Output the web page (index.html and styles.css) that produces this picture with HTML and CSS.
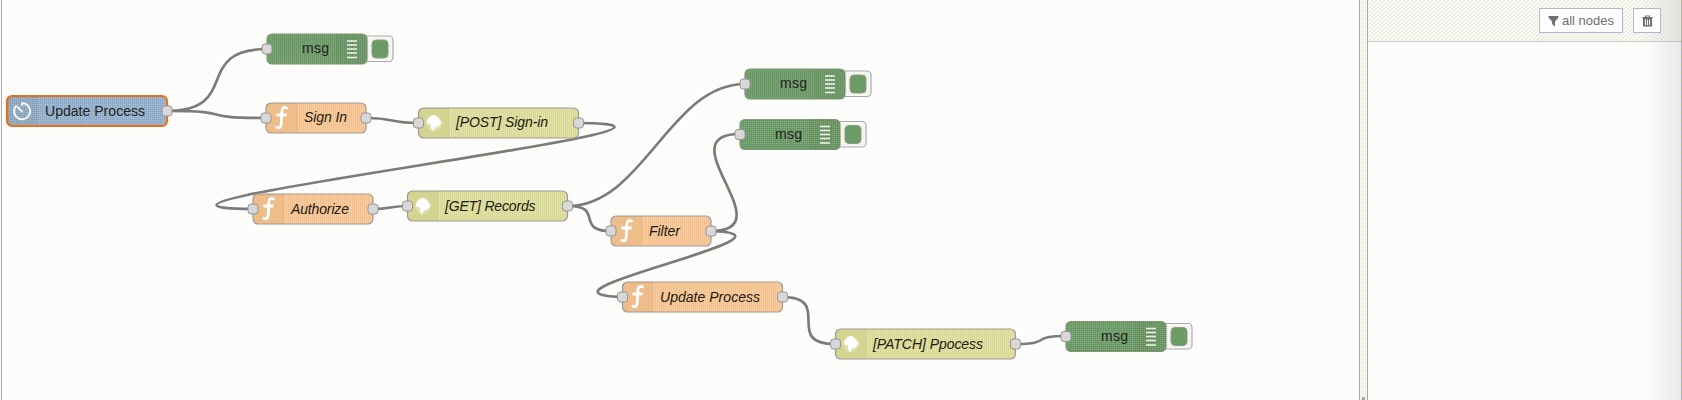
FILE: index.html
```
<!DOCTYPE html>
<html lang="en">
<head>
<meta charset="utf-8">
<title>Flow editor</title>
<link rel="stylesheet" href="styles.css">
</head>
<body>
<div class="editor">
<main class="workspace">
<svg class="canvas" width="1359" height="400" viewBox="0 0 1359 400">
  <defs>
    <pattern id="grain" width="4" height="4" patternUnits="userSpaceOnUse">
      <path class="grain-light" d="M0 0h1v1h-1zM2 2h1v1h-1zM2 0h1v1h-1zM0 2h1v1h-1z"/>
      <path class="grain-dark" d="M1 1h1v1h-1zM3 3h1v1h-1zM3 1h1v1h-1zM1 3h1v1h-1z"/>
    </pattern>
    <g id="port"><rect class="port" x="-5" y="-5" width="10" height="10" rx="3"/></g>
    <g id="fn">
      <path class="shade" d="M5 .5H30V30H5a4.500 4.500 0 0 1-4.500-4.500V5A4.500 4.500 0 0 1 5 .5z"/>
      <path class="divider" d="M30.500 1v29"/>
      <path class="glyph" d="M20.500 5.500c-3.200-1.300-4.500 0-4.700 4L15.300 20.500c-.3 4.200-1.500 5.800-4.500 4.300M11.500 12.500h8"/>
    </g>
    <g id="web">
      <path class="shade" d="M5 .5H30V30H5a4.500 4.500 0 0 1-4.500-4.500V5A4.500 4.500 0 0 1 5 .5z"/>
      <path class="divider" d="M30.500 1v29"/>
      <circle class="globe-haze" cx="16" cy="15.500" r="8"/>
      <path class="globe" d="M9 13l3-4 4-2 4 3 3.500 5-3 4-3.500 1-2 4-2-3v-4l-4-1z"/>
    </g>
    <g id="debug">
      <rect class="button" x="86" y="2.500" width="40" height="25.500" rx="4"/>
      <rect class="button-grain" x="101" y="4" width="23" height="22"/>
      <rect class="button-face" x="105" y="6.500" width="16" height="18" rx="4"/>
      <rect class="node green" x="0" y=".5" width="100" height="30" rx="5"/>
      <path class="shade" d="M70 .5h25.500a4.500 4.500 0 0 1 4.500 4.500v21a4.500 4.500 0 0 1-4.500 4.500H70z"/>
      <path class="divider" d="M69.500 1v29"/>
      <path class="bars" d="M80 7.500h10M80 11.500h10M80 15.500h10M80 19.500h10M80 24h10"/>
      <rect class="grain" x="0" y=".5" width="100" height="30" rx="5"/>
      <text class="label" x="35" y="19.500" textLength="27">msg</text>
      <use href="#port" x="0" y="15.500"/>
    </g>
  </defs>

  <g class="wires">
    <path d="M167 111C242 111 192 49 267 49"/>
    <path d="M167 111C242 111 191 118 266 118"/>
    <path d="M366 118C395 118 389 123 418 123"/>
    <path d="M578 123C783 124 48 208 253 209"/>
    <path d="M373 209C391 209 390 206 408 206"/>
    <path d="M568 206C643 206 670 84 745 84"/>
    <path d="M568 206C605 206 574 231 611 231"/>
    <path d="M711 231C786 231 665 134 740 134"/>
    <path d="M711 231C821.600 234.600 511.400 293.400 622 297"/>
    <path d="M782 297C835 297 782 344 835 344"/>
    <path d="M1015 344C1055 344 1027 336 1067 336"/>
  </g>

  <g transform="translate(7 96)">
    <rect class="node blue" x="0" y="0" width="160" height="30" rx="5"/>
    <path class="shade" d="M5 1H30V29H5a4 4 0 0 1-4-4V5A4 4 0 0 1 5 1z"/>
    <path class="divider" d="M30.500 1v28"/>
    <rect class="grain" x="1" y="1" width="158" height="28" rx="4"/>
    <path class="clock" d="M15 9V7.200A8 8 0 1 1 9 10M15 15.500L10.500 11"/>
    <text class="label" x="38" y="19.500" textLength="100">Update Process</text>
    <use href="#port" x="160" y="15"/>
  </g>

  <use href="#debug" x="267" y="33.500"/>
  <use href="#debug" x="745" y="68.500"/>
  <use href="#debug" x="740" y="119"/>
  <use href="#debug" x="1066" y="321"/>

  <g transform="translate(266 102.500)">
    <rect class="node orange" x="0" y=".5" width="100" height="30" rx="5"/>
    <use href="#fn"/><rect class="grain" x="31" y="1" width="68.500" height="29" rx="4"/>
    <text class="label changed" x="38" y="19.500" textLength="43">Sign In</text>
    <use href="#port" x="0" y="15.500"/><use href="#port" x="100" y="15.500"/>
  </g>
  <g transform="translate(418 107.500)">
    <rect class="node yellow" x=".5" y=".5" width="160" height="30" rx="5"/>
    <use href="#web"/><rect class="grain" x="31" y="1" width="129" height="29" rx="4"/>
    <text class="label changed" x="38" y="19.500" textLength="92">[POST] Sign-in</text>
    <use href="#port" x="0.500" y="15.500"/><use href="#port" x="160.500" y="15.500"/>
  </g>
  <g transform="translate(253 193.500)">
    <rect class="node orange" x="0" y=".5" width="120" height="30" rx="5"/>
    <use href="#fn"/><rect class="grain" x="31" y="1" width="88.500" height="29" rx="4"/>
    <text class="label changed" x="38" y="20" textLength="58">Authorize</text>
    <use href="#port" x="0" y="15.500"/><use href="#port" x="120" y="15.500"/>
  </g>
  <g transform="translate(407 190.500)">
    <rect class="node yellow" x=".5" y=".5" width="160" height="30" rx="5"/>
    <use href="#web"/><rect class="grain" x="31" y="1" width="129" height="29" rx="4"/>
    <text class="label changed" x="38" y="20" textLength="90.500">[GET] Records</text>
    <use href="#port" x="0.500" y="15.500"/><use href="#port" x="160.500" y="15.500"/>
  </g>
  <g transform="translate(611 215.500)">
    <rect class="node orange" x="0" y=".5" width="100" height="30" rx="5"/>
    <use href="#fn"/><rect class="grain" x="31" y="1" width="68.500" height="29" rx="4"/>
    <text class="label changed" x="38" y="20" textLength="31">Filter</text>
    <use href="#port" x="0" y="15.500"/><use href="#port" x="100" y="15.500"/>
  </g>
  <g transform="translate(622 281.500)">
    <rect class="node orange" x=".5" y=".5" width="160" height="30" rx="5"/>
    <use href="#fn"/><rect class="grain" x="31" y="1" width="129" height="29" rx="4"/>
    <text class="label changed" x="38" y="20" textLength="100">Update Process</text>
    <use href="#port" x="0.500" y="15.500"/><use href="#port" x="160.500" y="15.500"/>
  </g>
  <g transform="translate(835 328.500)">
    <rect class="node yellow" x=".5" y=".5" width="180" height="30" rx="5"/>
    <use href="#web"/><rect class="grain" x="31" y="1" width="149" height="29" rx="4"/>
    <text class="label changed" x="38" y="20" textLength="110">[PATCH] Ppocess</text>
    <use href="#port" x="0.500" y="15.500"/><use href="#port" x="180.500" y="15.500"/>
  </g>
</svg>
</main>
<div class="separator"><span class="grip"></span></div>
<aside class="sidebar">
  <header class="toolbar">
    <button class="tool filter">
      <svg width="11" height="12" viewBox="0 0 11 12"><path d="M.5 1h10v1.500L7 6.500v5L4 9V6.500L.5 2.500z"/></svg>
      <span>all nodes</span>
    </button>
    <button class="tool trash">
      <svg width="11" height="12" viewBox="0 0 11 12"><path fill-rule="evenodd" d="M3 2V.5h5V2h2.500v1.500H10V11.500H1V3.500H.5V2zM4.200 1.300V2h2.600v-.7zM3 4.500v5.500h1V4.500zM5 4.500v5.500h1V4.500zM7 4.500v5.500h1V4.500z"/></svg>
    </button>
  </header>
  <div class="panel"></div>
</aside>
</div>
</body>
</html>
```
FILE: styles.css
```
* { box-sizing: border-box; }

body {
  margin: 0;
  height: 400px;
  overflow: hidden;
  font-family: "Liberation Sans", Arial, sans-serif;
}

.editor {
  display: flex;
  width: 1682px;
  height: 400px;
  background-color: #fdfdff;
  background-image:
    conic-gradient(at 1px 1px, transparent 75%, #ffff96 0),
    conic-gradient(at 1px 1px, transparent 75%, #ffff96 0);
  background-size: 8px 8px;
  background-position: 0 0, 4px 4px;
}

.workspace {
  width: 1359px;
  box-shadow: inset 1px 0 #fdfdff, inset 2px 0 #aaaaad;
}

.canvas { display: block; }

.wires path { fill: none; stroke: #7c7b7a; stroke-width: 2.7; }

.node { stroke: #a09c98; stroke-width: 1.2; }
.blue { fill: #94b1cc; stroke: #e8701c; stroke-width: 2.2; }
.green { fill: #6c9c66; stroke: #7d9574; }
.orange { fill: #fcc792; }
.yellow { fill: #e0e09a; }

.grain { fill: url(#grain); }
.grain-light { fill: #ffffff; fill-opacity: .16; }
.grain-dark { fill: #555588; fill-opacity: .13; }

.shade { fill: #505020; fill-opacity: .08; }
.divider { stroke: #555; stroke-opacity: .25; stroke-dasharray: 1 1; }

.port { fill: #d8d8d8; stroke: #969696; }

.glyph { fill: none; stroke: #fff; stroke-width: 2.8; stroke-linecap: round; }
.globe { fill: #fff; }
.globe-haze { fill: #fff; fill-opacity: .25; }
.bars { stroke: #fafaf0; stroke-width: 1.4; }
.clock { fill: none; stroke: #f4f7fa; stroke-width: 1.8; stroke-linecap: round; }

.button { fill: #fafaf2; stroke: #a8a8b4; stroke-width: 1.2; }
.button-grain { fill: url(#grain); }
.button-face { fill: #6c9c66; stroke: #8a9a86; }

.label { font-size: 14px; fill: #222; }
.changed { font-style: italic; fill: #1c1a12; }

.separator {
  display: flex;
  flex-direction: column;
  justify-content: flex-end;
  align-items: center;
  width: 9px;
  border: solid #a8a8b0;
  border-width: 0 1px;
}

.grip { width: 3px; height: 3px; background: #aaa; }

.separator,
.toolbar {
  background-color: #f8f8fa;
  background-image:
    conic-gradient(at 1px 1px, transparent 75%, #ffff96 0),
    conic-gradient(at 1px 1px, transparent 75%, #ffff96 0),
    conic-gradient(at 1px 1px, transparent 75%, #d4d4f0 0),
    conic-gradient(at 1px 1px, transparent 75%, #d4d4f0 0);
  background-size: 4px 4px, 4px 4px, 4px 4px, 4px 4px;
  background-position: 0 0, 2px 2px, 1px 3px, 3px 1px;
}

.sidebar {
  position: relative;
  display: flex;
  flex-direction: column;
  flex: 1;
  border-right: 1px solid #b0b0b4;
}

/* Soft shadow along the window's right edge */
.sidebar::after {
  content: "";
  position: absolute;
  inset: 0 0 0 auto;
  width: 38px;
  background: linear-gradient(to right, transparent, rgba(120, 120, 140, .15));
  pointer-events: none;
}

.toolbar {
  display: flex;
  justify-content: flex-end;
  gap: 10px;
  height: 42px;
  padding: 8px 20px 0 0;
  border-bottom: 1px solid #c6c6d0;
}

.tool {
  position: relative;
  z-index: 1;
  display: flex;
  align-items: center;
  justify-content: center;
  gap: 3px;
  height: 25px;
  padding: 0;
  border: 1px solid #b8b8c4;
  background: #fdfdff;
  color: #707070;
  font: 13px "Liberation Sans", Arial, sans-serif;
}

.tool svg { fill: #707070; }
.filter { width: 84px; }
.trash { width: 28px; }
.panel { flex: 1; }
```
